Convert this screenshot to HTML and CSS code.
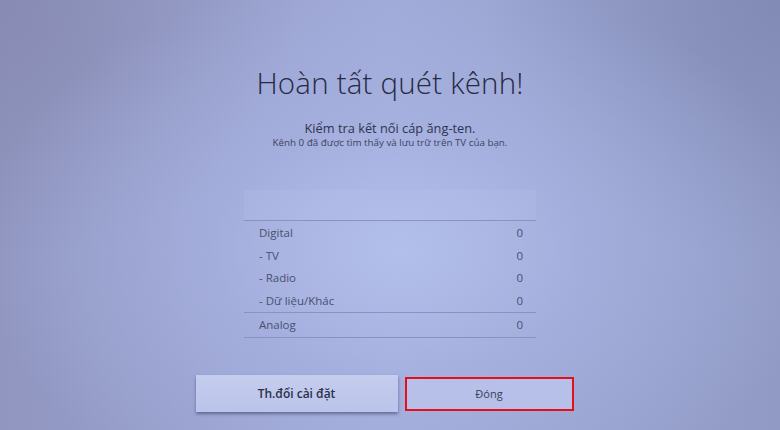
FILE: index.html
```html
<!DOCTYPE html>
<html lang="vi">
<head>
<meta charset="utf-8">
<link rel="stylesheet" href="styles.css">
</head>
<body>
<div class="screen">
  <h1 class="title">Hoàn tất quét kênh!</h1>
  <p class="subtitle">Kiểm tra kết nối cáp ăng-ten.</p>
  <p class="note">Kênh 0 đã được tìm thấy và lưu trữ trên TV của bạn.</p>
  <div class="panel"></div>
  <div class="table">
    <div class="group">
      <div class="row"><span>Digital</span><span>0</span></div>
      <div class="row"><span>- TV</span><span>0</span></div>
      <div class="row"><span>- Radio</span><span>0</span></div>
      <div class="row"><span>- Dữ liệu/Khác</span><span>0</span></div>
    </div>
    <div class="group">
      <div class="row"><span>Analog</span><span>0</span></div>
    </div>
  </div>
  <div class="actions">
    <div class="btn btn-main">Th.đổi cài đặt</div>
    <div class="btn btn-focus">Đóng</div>
  </div>
</div>
</body>
</html>
```

FILE: styles.css
```css
html, body {
  margin: 0;
  padding: 0;
}
body {
  width: 780px;
  height: 430px;
  overflow: hidden;
  font-family: "Open Sans", "Noto Sans", sans-serif;
}
.screen {
  width: 780px;
  height: 430px;
  display: flex;
  flex-direction: column;
  align-items: center;
  background:
    radial-gradient(ellipse 420px 280px at 400px 250px, rgba(180,192,236,0.95) 0%, rgba(170,181,228,0.6) 45%, rgba(160,168,215,0) 100%),
    radial-gradient(ellipse 300px 260px at 0px 0px, rgba(130,132,170,0.6) 0%, rgba(130,132,170,0) 100%),
    radial-gradient(ellipse 300px 260px at 780px 0px, rgba(118,128,170,0.6) 0%, rgba(118,128,170,0) 100%),
    linear-gradient(90deg, #9096c0 0%, #a0aad8 50%, #909ac4 100%);
}
.title {
  margin: 61px 0 0;
  font-size: 29.5px;
  font-weight: 300;
  color: #262a45;
  line-height: 44px;
  letter-spacing: 0.2px;
}
.subtitle {
  margin: 14px 0 0;
  font-size: 12.8px;
  color: #2e3352;
  line-height: 18px;
}
.note {
  margin: 0;
  font-size: 9.8px;
  color: #3e4362;
  line-height: 12px;
}
.panel {
  width: 292px;
  height: 30px;
  margin-top: 41px;
  background: rgba(190,200,240,0.18);
}
.table {
  width: 292px;
  border-top: 1px solid #8a93bd;
}
.group {
  border-bottom: 1px solid #8a93bd;
  padding: 1px 0 0;
}
.row {
  display: flex;
  justify-content: space-between;
  padding: 0 13px 0 15px;
  height: 22.5px;
  line-height: 22px;
  font-size: 11.5px;
  color: #4a5072;
}
.actions {
  margin-top: 37px;
  display: flex;
  align-items: flex-start;
  gap: 7px;
  margin-left: -11px;
}
.btn {
  display: flex;
  align-items: center;
  justify-content: center;
  font-size: 12px;
  color: #2b2f4a;
}
.btn-main {
  width: 202px;
  height: 37px;
  background: linear-gradient(180deg, #c5cdee 0%, #bac3ea 100%);
  box-shadow: 0 2px 3px rgba(50,55,90,0.55);
  font-weight: 600;
}
.btn-focus {
  width: 165px;
  height: 30px;
  margin-top: 2px;
  border: 2px solid #e3101c;
  background: #b7c0e8;
  font-size: 11px;
  color: #3a3f5e;
}
```
